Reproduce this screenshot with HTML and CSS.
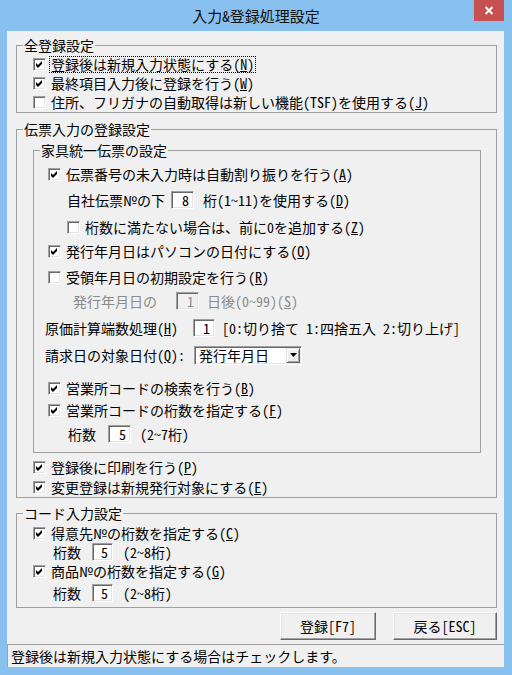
FILE: index.html
```html
<!DOCTYPE html>
<html lang="ja">

<head>
    <meta charset="UTF-8">
    <meta name="viewport" content="width=device-width, initial-scale=1.0">
    <title>入力&amp;登録処理設定</title>
    <link rel="stylesheet" href="styles.css">
</head>

<body>

    <div class="window">
        <div class="titlebar">
            <span class="title">入力&amp;登録処理設定</span>
            <button type="button" class="close" aria-label="閉じる">
                <svg width="10" height="9" viewBox="0 0 10 9"><path d="M1.5 1 L8.5 8 M8.5 1 L1.5 8" stroke="#fff" stroke-width="2" /></svg>
            </button>
        </div>

        <div class="client">
            <!-- 全登録設定 -->
            <fieldset class="group group-all">
                <legend>全登録設定</legend>
                <div class="row">
                    <span class="check"><svg viewBox="0 0 9 9"><path d="M1 3 L3 5 L7 1 L7 4 L3 8 L1 6 Z" /></svg></span>
                    <span class="label focus">登録後は新規入力状態にする(<u>N</u>)</span>
                </div>
                <div class="row">
                    <span class="check"><svg viewBox="0 0 9 9"><path d="M1 3 L3 5 L7 1 L7 4 L3 8 L1 6 Z" /></svg></span>
                    <span class="label">最終項目入力後に登録を行う(<u>W</u>)</span>
                </div>
                <div class="row">
                    <span class="check"></span>
                    <span class="label">住所、フリガナの自動取得は新しい機能(TSF)を使用する(<u>J</u>)</span>
                </div>
            </fieldset>

            <!-- 伝票入力の登録設定 -->
            <fieldset class="group group-slip">
                <legend>伝票入力の登録設定</legend>

                <fieldset class="group group-inner">
                    <legend>家具統一伝票の設定</legend>
                    <div class="row">
                        <span class="check"><svg viewBox="0 0 9 9"><path d="M1 3 L3 5 L7 1 L7 4 L3 8 L1 6 Z" /></svg></span>
                        <span class="label">伝票番号の未入力時は自動割り振りを行う(<u>A</u>)</span>
                    </div>
                    <div class="row sub">
                        <span>自社伝票№の下</span>
                        <span class="num num-d">8</span>
                        <span>桁(1～11)を使用する(<u>D</u>)</span>
                    </div>
                    <div class="row sub loose">
                        <span class="check"></span>
                        <span class="label">桁数に満たない場合は、前に0を追加する(<u>Z</u>)</span>
                    </div>
                    <div class="row tight">
                        <span class="check"><svg viewBox="0 0 9 9"><path d="M1 3 L3 5 L7 1 L7 4 L3 8 L1 6 Z" /></svg></span>
                        <span class="label">発行年月日はパソコンの日付にする(<u>O</u>)</span>
                    </div>
                    <div class="row">
                        <span class="check"></span>
                        <span class="label">受領年月日の初期設定を行う(<u>R</u>)</span>
                    </div>
                    <div class="row disabled tight">
                        <span>発行年月日の</span>
                        <span class="num num-s">1</span>
                        <span>日後(0～99)(<u>S</u>)</span>
                    </div>
                    <div class="row plain loose">
                        <span>原価計算端数処理(<u>H</u>)</span>
                        <span class="num num-h">1</span>
                        <span>[0:切り捨て 1:四捨五入 2:切り上げ]</span>
                    </div>
                    <div class="row plain loose">
                        <span>請求日の対象日付(<u>Q</u>)：</span>
                        <span class="select">
                            <span class="select-text">発行年月日</span>
                            <span class="drop"><svg width="7" height="4" viewBox="0 0 7 4"><path d="M0 0 H7 L3.5 4 Z" /></svg></span>
                        </span>
                    </div>
                    <div class="row sep">
                        <span class="check"><svg viewBox="0 0 9 9"><path d="M1 3 L3 5 L7 1 L7 4 L3 8 L1 6 Z" /></svg></span>
                        <span class="label">営業所コードの検索を行う(<u>B</u>)</span>
                    </div>
                    <div class="row flush">
                        <span class="check"><svg viewBox="0 0 9 9"><path d="M1 3 L3 5 L7 1 L7 4 L3 8 L1 6 Z" /></svg></span>
                        <span class="label">営業所コードの桁数を指定する(<u>F</u>)</span>
                    </div>
                    <div class="row digits tight">
                        <span>桁数</span>
                        <span class="num num-k">5</span>
                        <span>(2～7桁)</span>
                    </div>
                </fieldset>

                <div class="row">
                    <span class="check"><svg viewBox="0 0 9 9"><path d="M1 3 L3 5 L7 1 L7 4 L3 8 L1 6 Z" /></svg></span>
                    <span class="label">登録後に印刷を行う(<u>P</u>)</span>
                </div>
                <div class="row">
                    <span class="check"><svg viewBox="0 0 9 9"><path d="M1 3 L3 5 L7 1 L7 4 L3 8 L1 6 Z" /></svg></span>
                    <span class="label">変更登録は新規発行対象にする(<u>E</u>)</span>
                </div>
            </fieldset>

            <!-- コード入力設定 -->
            <fieldset class="group group-code">
                <legend>コード入力設定</legend>
                <div class="row">
                    <span class="check"><svg viewBox="0 0 9 9"><path d="M1 3 L3 5 L7 1 L7 4 L3 8 L1 6 Z" /></svg></span>
                    <span class="label">得意先№の桁数を指定する(<u>C</u>)</span>
                </div>
                <div class="row digits">
                    <span>桁数</span>
                    <span class="num num-k">5</span>
                    <span>(2～8桁)</span>
                </div>
                <div class="row">
                    <span class="check"><svg viewBox="0 0 9 9"><path d="M1 3 L3 5 L7 1 L7 4 L3 8 L1 6 Z" /></svg></span>
                    <span class="label">商品№の桁数を指定する(<u>G</u>)</span>
                </div>
                <div class="row digits last">
                    <span>桁数</span>
                    <span class="num num-k">5</span>
                    <span>(2～8桁)</span>
                </div>
            </fieldset>

            <div class="actions">
                <button type="button" class="btn btn-save">登録[F7]</button>
                <button type="button" class="btn btn-back">戻る[ESC]</button>
            </div>

            <div class="status">登録後は新規入力状態にする場合はチェックします。</div>
        </div>
    </div>

</body>

</html>
```

FILE: styles.css
```css
* {
    box-sizing: border-box;
}

body {
    margin: 0;
    font-family: "Noto Sans CJK JP", "Noto Sans", sans-serif;
    font-size: 14px;
    line-height: 16px;
    font-feature-settings: "hwid" 1;
    color: #000;
}

u {
    text-underline-offset: 1px;
}

.window {
    width: 512px;
    height: 675px;
    background-color: #88c0f0;
    display: flex;
    flex-direction: column;
}

/* title bar */
.titlebar {
    height: 31px;
    display: grid;
    grid-template-columns: 1fr auto 1fr;
}

.title {
    grid-column: 2;
    align-self: center;
    font-size: 15px;
    margin-top: 1px;
    color: #111;
}

.close {
    grid-column: 3;
    justify-self: end;
    align-self: start;
    width: 30px;
    height: 21px;
    margin-right: 8px;
    padding: 0;
    border: none;
    background-color: #c75050;
    display: flex;
    align-items: center;
    justify-content: center;
}

.client {
    flex: 1;
    margin: 0 8px 8px 7px;
    background-color: #f0f0f0;
    display: flex;
    flex-direction: column;
}

/* group boxes */
.group {
    margin: 0;
    padding: 0;
    border: 1px solid #a0a0a0;
    min-width: 0;
}

.group legend {
    margin-left: 6px;
    padding: 0 1px;
    line-height: 16px;
}

.group-all,
.group-slip,
.group-code {
    margin-left: 9px;
    width: 481px;
}

.group-all {
    margin-top: 6px;
    padding: 2px 0 0;
}

.group-all .row {
    height: 19px;
}

.group-slip {
    margin-top: 8px;
    padding: 5px 0 0;
}

.group-inner {
    margin-left: 16px;
    width: 448px;
    padding: 5px 0 7px;
}

.group-code {
    margin-top: 7px;
    padding: 3px 0 4px;
}

/* rows */
.row {
    display: flex;
    align-items: center;
    height: 20px;
    padding-left: 16px;
    white-space: nowrap;
}

.group-slip > .row:first-of-type {
    margin-top: 4px;
}

.group-inner .row {
    height: 22px;
    margin-top: 4px;
    padding-left: 14px;
}

.group-inner .row:first-of-type {
    margin-top: 0;
}

.group-inner .row.tight {
    margin-top: 2px;
}

.group-inner .row.loose {
    margin-top: 5px;
}

.group-inner .row.sep {
    margin-top: 11px;
}

.group-inner .row.flush {
    margin-top: 0;
}

.group-inner .row.sub {
    padding-left: 33px;
}

.group-inner .row.plain {
    padding-left: 11px;
}

.group-inner .row.disabled {
    padding-left: 39px;
    color: #8a8a8a;
}

.group-inner .row.digits {
    padding-left: 34px;
}

.group-code .row {
    height: 18px;
}

.group-code .row.digits {
    height: 20px;
    padding-left: 36px;
}

.group-code .row.last {
    margin-top: 3px;
}

/* checkbox */
.check {
    width: 13px;
    height: 13px;
    flex: none;
    background-color: #fff;
    border: 1px solid;
    border-color: #a0a0a0 #fff #fff #a0a0a0;
    box-shadow: inset 1px 1px 0 #696969, inset -1px -1px 0 #e3e3e3;
    margin-right: 4px;
}

.check svg {
    display: block;
    width: 9px;
    height: 9px;
    margin: 1px;
    fill: #000;
}

.label {
    display: inline-block;
    height: 15px;
    line-height: 15px;
    padding: 0 1px;
}

.label.focus {
    outline: 1px dotted #000;
}

/* number boxes */
.num {
    display: inline-flex;
    align-items: center;
    justify-content: flex-end;
    width: 23px;
    height: 18px;
    padding-right: 4px;
    background-color: #fff;
    border: 1px solid;
    border-color: #a0a0a0 #fff #fff #a0a0a0;
    box-shadow: inset 1px 1px 0 #696969, inset -1px -1px 0 #e3e3e3;
}

.num-d {
    margin: 0 9px 0 6px;
}

.num-s {
    margin: 0 8px 0 19px;
    background-color: #f0f0f0;
}

.num-h {
    width: 22px;
    margin: 0 7px 0 15px;
}

.group-inner .num-k {
    margin: 0 9px 0 12px;
}

.group-code .num-k {
    width: 21px;
    margin: 0 10px 0 11px;
}

/* dropdown */
.select {
    display: inline-flex;
    align-items: center;
    width: 108px;
    height: 19px;
    margin-left: 9px;
    padding: 0 1px 0 4px;
    background-color: #fff;
    border: 1px solid;
    border-color: #a0a0a0 #fff #fff #a0a0a0;
    box-shadow: inset 1px 1px 0 #696969, inset -1px -1px 0 #e3e3e3;
}

.select-text {
    flex: 1;
}

.drop {
    width: 14px;
    height: 15px;
    display: flex;
    align-items: center;
    justify-content: center;
    background-color: #f0f0f0;
    border: 1px solid;
    border-color: #e3e3e3 #696969 #696969 #e3e3e3;
    box-shadow: inset 1px 1px 0 #fff, inset -1px -1px 0 #a0a0a0;
}

/* buttons */
.actions {
    display: flex;
    justify-content: flex-end;
    gap: 17px;
    margin: 4px 7px 0 0;
}

.btn {
    height: 28px;
    padding: 0;
    font: inherit;
    font-feature-settings: "hwid" 1;
    color: #000;
    background-color: #f0f0f0;
    border: 1px solid;
    border-color: #fff #696969 #696969 #fff;
    box-shadow: inset -1px -1px 0 #a0a0a0, inset 1px 1px 0 #e3e3e3;
}

.btn-save {
    width: 96px;
}

.btn-back {
    width: 104px;
}

/* status bar */
.status {
    margin-top: auto;
    height: 23px;
    padding: 3px 0 0 3px;
    border-top: 1px solid #a0a0a0;
    border-left: 1px solid #a0a0a0;
    white-space: nowrap;
}
```
